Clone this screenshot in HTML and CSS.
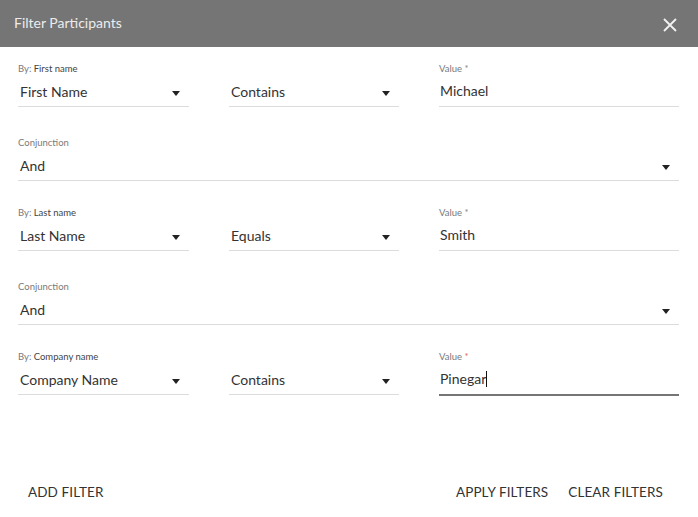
FILE: index.html
```html
<!DOCTYPE html>
<html>
<head>
<meta charset="utf-8">
<link rel="stylesheet" href="styles.css">
</head>
<body>
<div class="dialog">
  <header class="header">
    <span class="title">Filter Participants</span>
    <svg class="close" width="14" height="14" viewBox="0 0 14 14"><path d="M1 1 L13 13 M13 1 L1 13" stroke="#f2f2f2" stroke-width="1.8" fill="none"/></svg>
  </header>
  <main class="content">
    <div class="row">
      <div class="field">
        <div class="label">By: <span class="strong">First name</span></div>
        <div class="select"><span>First Name</span><i class="caret"></i></div>
      </div>
      <div class="field">
        <div class="label">&nbsp;</div>
        <div class="select"><span>Contains</span><i class="caret"></i></div>
      </div>
      <div class="field">
        <div class="label">Value <span class="req">*</span></div>
        <div class="input">Michael</div>
      </div>
    </div>
    <div class="conj">
      <div class="label">Conjunction</div>
      <div class="select"><span>And</span><i class="caret"></i></div>
    </div>
    <div class="row">
      <div class="field">
        <div class="label">By: <span class="strong">Last name</span></div>
        <div class="select"><span>Last Name</span><i class="caret"></i></div>
      </div>
      <div class="field">
        <div class="label">&nbsp;</div>
        <div class="select"><span>Equals</span><i class="caret"></i></div>
      </div>
      <div class="field">
        <div class="label">Value <span class="req">*</span></div>
        <div class="input">Smith</div>
      </div>
    </div>
    <div class="conj">
      <div class="label">Conjunction</div>
      <div class="select"><span>And</span><i class="caret"></i></div>
    </div>
    <div class="row">
      <div class="field">
        <div class="label">By: <span class="strong">Company name</span></div>
        <div class="select"><span>Company Name</span><i class="caret"></i></div>
      </div>
      <div class="field">
        <div class="label">&nbsp;</div>
        <div class="select"><span>Contains</span><i class="caret"></i></div>
      </div>
      <div class="field">
        <div class="label">Value <span class="req active">*</span></div>
        <div class="input focused">Pinegar<span class="cursor"></span></div>
      </div>
    </div>
  </main>
  <footer class="footer">
    <button class="btn">ADD FILTER</button>
    <div class="right">
      <button class="btn">APPLY FILTERS</button>
      <button class="btn">CLEAR FILTERS</button>
    </div>
  </footer>
</div>
</body>
</html>
```
FILE: styles.css
```css
* { box-sizing: border-box; }
html, body { margin: 0; padding: 0; background: #fff; }
body { font-family: "Lato", "Liberation Sans", sans-serif; color: #333; }
.dialog { width: 698px; height: 517px; display: flex; flex-direction: column; }
.header {
  height: 47px; background: #757575; display: flex; align-items: center;
  justify-content: space-between; padding: 0 21px 0 14px; flex-shrink: 0;
}
.title { color: #ececec; font-size: 14px; margin-top: -2px; }
.close { margin-top: 2px; }
.content { padding: 17px 19px 0 18px; flex: 1; }
.row { display: grid; grid-template-columns: 171px 170px 240px; column-gap: 40px; margin-bottom: 31px; }
.conj { margin-bottom: 27px; }
.label { font-size: 9.5px; line-height: 10px; color: #7a7a7a; height: 12px; }
.label .strong { color: #444; }
.req { color: #888; }
.req.active { color: #e06a5a; }
.select, .input {
  position: relative; height: 31px; padding: 6px 2px 0 2px; font-size: 14px; line-height: 20px;
  color: #333; border-bottom: 1px solid #dcdcdc;
}
.caret {
  position: absolute; right: 9px; top: 15px; width: 0; height: 0;
  border-left: 4.5px solid transparent; border-right: 4.5px solid transparent; border-top: 5px solid #222;
}
.input { padding-top: 5px; padding-left: 1px; }
.input.focused { border-bottom: 2px solid #757575; height: 32px; }
.cursor { display: inline-block; width: 1px; height: 16px; background: #111; vertical-align: -3px; }
.footer { height: 50px; display: flex; justify-content: space-between; align-items: flex-start; padding: 16px 25px 0 18px; }
.right { display: flex; }
.btn {
  background: none; border: 0; font-family: inherit; font-size: 13.5px; color: #333;
  padding: 0 10px; height: 18px; line-height: 18px; letter-spacing: 0.1px;
}
```
